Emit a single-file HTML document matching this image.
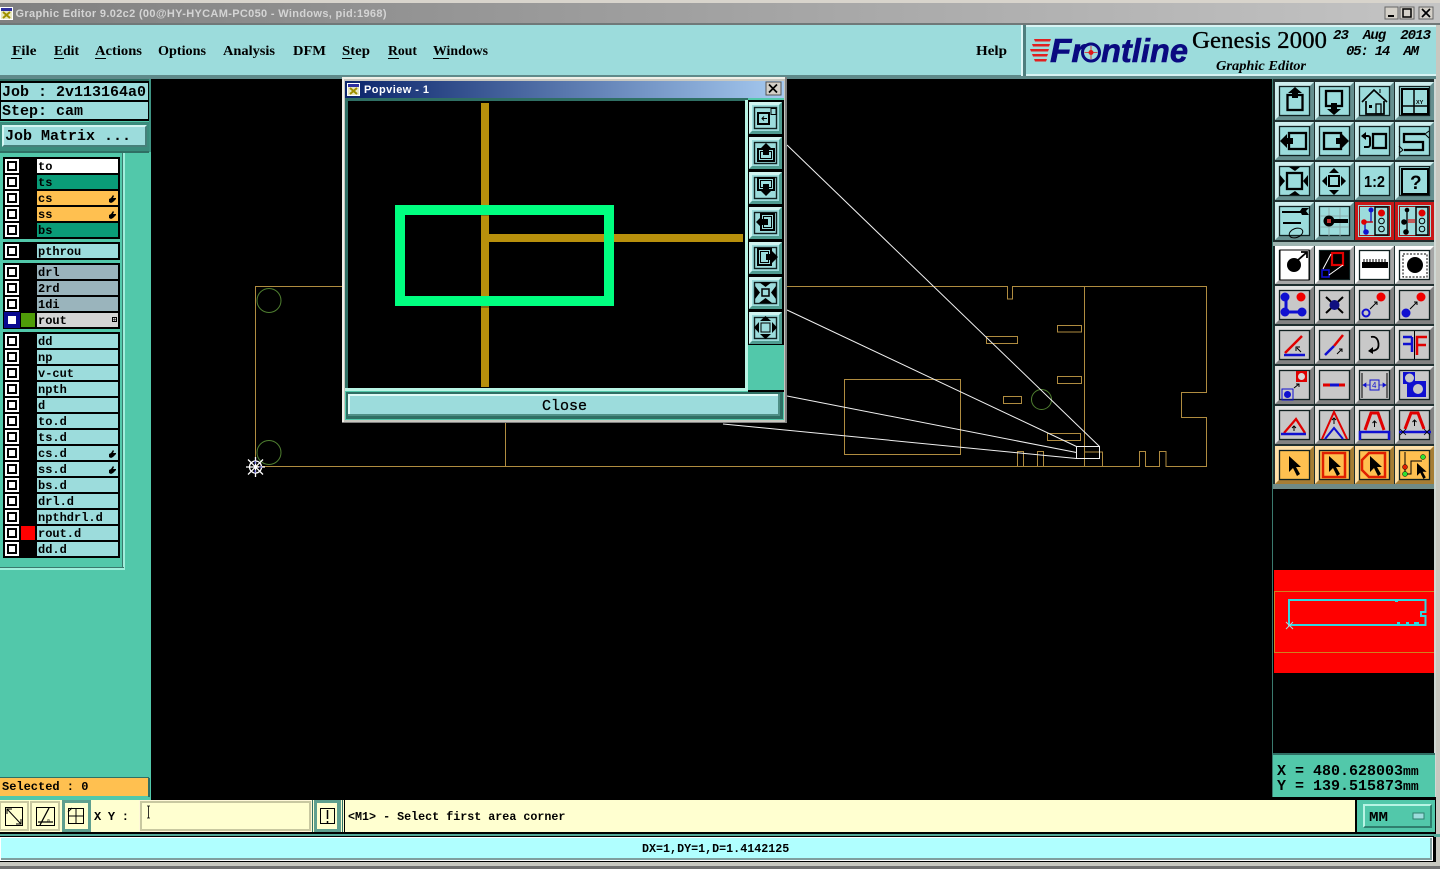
<!DOCTYPE html>
<html><head><meta charset="utf-8"><title>Graphic Editor</title>
<style>
html,body{margin:0;padding:0;background:#000;width:1440px;height:869px;overflow:hidden}
svg{display:block}
text{white-space:pre}
.m{font-family:"Liberation Serif",serif;font-weight:bold;font-size:14px;fill:#000}
.l{font-family:"Liberation Mono",monospace;font-weight:bold;font-size:12px;fill:#000}
.j{font-family:"Liberation Mono",monospace;font-weight:bold;font-size:15px;fill:#000}
.t{font-family:"Liberation Sans",sans-serif;font-weight:bold;font-size:11px}
</style></head><body>
<svg xmlns="http://www.w3.org/2000/svg" width="1440" height="869" viewBox="0 0 1440 869">
<defs>
<linearGradient id="tg" x1="0" x2="1" y1="0" y2="0"><stop offset="0" stop-color="#808080"/><stop offset="1" stop-color="#c4c4c4"/></linearGradient>
<linearGradient id="pg" x1="0" x2="1" y1="0" y2="0"><stop offset="0" stop-color="#0a246a"/><stop offset="1" stop-color="#a6caf0"/></linearGradient>
<g id="k"><rect x="5" width="14" height="14" fill="#fff"/><rect x="7" y="2" width="10" height="10" fill="#000"/><rect x="9" y="4" width="6" height="6" fill="#fff"/></g>
<path id="h" d="M0 7V4l2-1 2-3 1 1-1 2h3v1l-3 3-2 1H2z" fill="#000"/>
<g id="b"><rect width="39" height="38" fill="currentColor"/><path d="M0 0H39L35 4H4V34L0 38z" fill="#fff" opacity=".5"/><path d="M39 0V38H0L4 34H35V4z" fill="#000" opacity=".35"/><rect x="4.500" y="4.500" width="30" height="29" fill="none" stroke="#102020" stroke-width="1.300"/></g>
<g id="p"><rect width="33" height="32" fill="#9cdcdc"/><path d="M0 0H33L30 3H3V29L0 32z" fill="#d0f4f0"/><path d="M33 0V32H0L3 29H30V3z" fill="#4f9c90"/><rect x="5.500" y="5.500" width="22" height="21" fill="none" stroke="#102020" stroke-width="1.400"/></g>
<path id="ar" d="M0 0V16L4 12 8 20 11 18 7 11H12z" fill="#000"/>
<g id="xi"><rect width="13" height="13" fill="#fff"/><rect x="1" y="1" width="11" height="11" fill="#3030a0"/><rect x="1" y="4" width="11" height="8" fill="#e8e8c0"/><path d="M3 5l7 6M10 5l-7 6" stroke="#a09000" stroke-width="2"/></g>
</defs>

<!-- title bar -->
<rect width="1440" height="869" fill="#000"/>
<rect y="0" width="1440" height="3" fill="#d8d4cc"/>
<rect y="3" width="1440" height="20" fill="url(#tg)"/>
<rect y="23" width="1440" height="2" fill="#707878"/>
<use href="#xi" x="0" y="7"/>
<text class="t" x="15.500" y="17" fill="#d4d4d4" textLength="371">Graphic Editor 9.02c2 (00@HY-HYCAM-PC050 - Windows, pid:1968)</text>
<g>
<rect x="1385" y="7" width="13" height="12" fill="#d4d0c8" stroke="#666"/><rect x="1388" y="15" width="6" height="2" fill="#000"/>
<rect x="1400" y="7" width="14" height="12" fill="#d4d0c8" stroke="#666"/><rect x="1403" y="9" width="8" height="8" fill="none" stroke="#000" stroke-width="1.500"/>
<rect x="1419" y="7" width="14" height="12" fill="#d4d0c8" stroke="#666"/><path d="M1422 9l8 8M1430 9l-8 8" stroke="#000" stroke-width="1.700"/>
</g>

<!-- menu -->
<rect y="25" width="1440" height="51" fill="#9cdcdc"/>
<rect y="75" width="1440" height="4" fill="#5f8a8a"/>
<text class="m" x="12" y="55" textLength="24.500" lengthAdjust="spacingAndGlyphs">File</text><rect x="11" y="58" width="11" height="1" fill="#000"/>
<text class="m" x="54" y="55" textLength="25" lengthAdjust="spacingAndGlyphs">Edit</text><rect x="54" y="58" width="10" height="1" fill="#000"/>
<text class="m" x="95" y="55" textLength="47" lengthAdjust="spacingAndGlyphs">Actions</text><rect x="95" y="58" width="11" height="1" fill="#000"/>
<text class="m" x="158" y="55" textLength="48" lengthAdjust="spacingAndGlyphs">Options</text>
<text class="m" x="223" y="55" textLength="52" lengthAdjust="spacingAndGlyphs">Analysis</text>
<text class="m" x="293" y="55" textLength="33" lengthAdjust="spacingAndGlyphs">DFM</text>
<text class="m" x="342" y="55" textLength="28" lengthAdjust="spacingAndGlyphs">Step</text><rect x="342" y="58" width="10" height="1" fill="#000"/>
<text class="m" x="388" y="55" textLength="29" lengthAdjust="spacingAndGlyphs">Rout</text><rect x="388" y="58" width="11" height="1" fill="#000"/>
<text class="m" x="433" y="55" textLength="55" lengthAdjust="spacingAndGlyphs">Windows</text><rect x="433" y="58" width="16" height="1" fill="#000"/>
<text class="m" x="976" y="55" textLength="31" lengthAdjust="spacingAndGlyphs">Help</text>

<!-- logo area -->
<rect x="1021" y="25" width="2" height="51" fill="#e0f8f8"/><rect x="1023" y="25" width="3" height="51" fill="#4f7f7f"/>
<rect x="1026" y="25" width="410" height="2" fill="#d8f4f4"/>
<rect x="1026" y="74" width="410" height="2" fill="#d8f4f4"/>
<g fill="#e02020"><path d="M1034 39h17l-1 2.500h-15zM1032 44h18l-1 2.500h-16zM1030 49h19l-1 2.500h-17zM1032 54h16l-1 2.500h-14zM1034 59h13l-1 2.500h-11z"/></g>
<text x="1050" y="62" font-family="Liberation Sans,sans-serif" font-weight="bold" font-style="italic" font-size="33" fill="#0a0a80" stroke="#0a0a80" stroke-width=".6" textLength="35" lengthAdjust="spacingAndGlyphs">Fr</text>
<circle cx="1091" cy="52.500" r="8.500" fill="#9cdcdc" stroke="#0a0a80" stroke-width="3"/>
<circle cx="1091" cy="52.500" r="2.500" fill="#e01818"/><path d="M1091 46v13M1084.500 52.500h13" stroke="#e01818" stroke-width=".8"/>
<text x="1101" y="62" font-family="Liberation Sans,sans-serif" font-weight="bold" font-style="italic" font-size="33" fill="#0a0a80" stroke="#0a0a80" stroke-width=".6" textLength="87" lengthAdjust="spacingAndGlyphs">ntline</text>
<text x="1192" y="48" font-family="Liberation Serif,serif" font-size="24.500" fill="#000" textLength="135" lengthAdjust="spacingAndGlyphs" style="stroke:#000;stroke-width:.3">Genesis 2000</text>
<text x="1216" y="70" font-family="Liberation Serif,serif" font-weight="bold" font-style="italic" font-size="14" fill="#000" textLength="90" lengthAdjust="spacingAndGlyphs">Graphic Editor</text>
<text x="1333" y="39" font-family="Liberation Mono,monospace" font-weight="bold" font-style="italic" font-size="14" fill="#000" textLength="98">23  Aug  2013</text>
<text x="1346" y="55" font-family="Liberation Mono,monospace" font-weight="bold" font-style="italic" font-size="14" fill="#000" textLength="73">05: 14  AM</text>

<!-- left panel -->
<rect x="0" y="79" width="151" height="721" fill="#52c8aa"/>
<rect x="0" y="79" width="150" height="2" fill="#2f6f64"/>
<rect x="149" y="79" width="2" height="73" fill="#3f9383"/>
<rect x="0" y="81" width="149" height="40" fill="#000"/>
<rect x="1" y="83" width="147" height="17" fill="#9cdcdc"/>
<rect x="1" y="102" width="147" height="17" fill="#9cdcdc"/>
<text class="j" x="2" y="96" textLength="144">Job : 2v113164a0</text>
<text class="j" x="2" y="115" textLength="81">Step: cam</text>
<rect x="0" y="122" width="149" height="29" fill="#3a8c7c"/>
<rect x="2" y="125" width="145" height="22" fill="#9cdcdc"/>
<path d="M2 125H147L145 127H4V145L2 147z" fill="#d4f7f3"/><path d="M147 125V147H2L4 145H145V127z" fill="#46807a"/>
<text class="j" x="5" y="140" textLength="126">Job Matrix ...</text>
<rect x="0" y="151" width="149" height="2" fill="#2f6f64"/>

<rect x="0" y="153" width="123" height="415" fill="#52c8aa"/>
<rect x="123" y="153" width="2" height="417" fill="#a0f0dc"/>
<rect x="122" y="153" width="1" height="415" fill="#3a7a6e"/>
<rect x="0" y="567" width="124" height="1" fill="#3a7a6e"/>
<rect x="0" y="568" width="125" height="2" fill="#a0f0dc"/>

<!-- layer groups -->
<rect x="3" y="157" width="117" height="82" fill="#000"/>
<rect x="3" y="242" width="117" height="18" fill="#000"/>
<rect x="3" y="263" width="117" height="66" fill="#000"/>
<rect x="3" y="332" width="117" height="226" fill="#000"/>

<g>
<rect x="37" y="159" width="81" height="14" fill="#fff"/>
<rect x="37" y="175" width="81" height="14" fill="#0a9c78"/>
<rect x="37" y="191" width="81" height="14" fill="#ffc050"/>
<rect x="37" y="207" width="81" height="14" fill="#ffc050"/>
<rect x="37" y="223" width="81" height="14" fill="#0a9c78"/>
<rect x="37" y="244" width="81" height="14" fill="#9cdcdc"/>
<rect x="37" y="265" width="81" height="14" fill="#9ab4bc"/>
<rect x="37" y="281" width="81" height="14" fill="#9ab4bc"/>
<rect x="37" y="297" width="81" height="14" fill="#9ab4bc"/>
<rect x="37" y="313" width="81" height="14" fill="#d4d4d4"/>
<rect x="37" y="334" width="81" height="14" fill="#9cdcdc"/>
<rect x="37" y="350" width="81" height="14" fill="#9cdcdc"/>
<rect x="37" y="366" width="81" height="14" fill="#9cdcdc"/>
<rect x="37" y="382" width="81" height="14" fill="#9cdcdc"/>
<rect x="37" y="398" width="81" height="14" fill="#9cdcdc"/>
<rect x="37" y="414" width="81" height="14" fill="#9cdcdc"/>
<rect x="37" y="430" width="81" height="14" fill="#9cdcdc"/>
<rect x="37" y="446" width="81" height="14" fill="#9cdcdc"/>
<rect x="37" y="462" width="81" height="14" fill="#9cdcdc"/>
<rect x="37" y="478" width="81" height="14" fill="#9cdcdc"/>
<rect x="37" y="494" width="81" height="14" fill="#9cdcdc"/>
<rect x="37" y="510" width="81" height="14" fill="#9cdcdc"/>
<rect x="37" y="526" width="81" height="14" fill="#9cdcdc"/>
<rect x="37" y="542" width="81" height="14" fill="#9cdcdc"/>
</g>
<g>
<use href="#k" y="159"/><use href="#k" y="175"/><use href="#k" y="191"/><use href="#k" y="207"/><use href="#k" y="223"/><use href="#k" y="244"/><use href="#k" y="265"/><use href="#k" y="281"/><use href="#k" y="297"/>
<rect x="4" y="312" width="16" height="16" fill="#0a0a90"/><rect x="8" y="316" width="8" height="8" fill="#fff"/>
<use href="#k" y="334"/><use href="#k" y="350"/><use href="#k" y="366"/><use href="#k" y="382"/><use href="#k" y="398"/><use href="#k" y="414"/><use href="#k" y="430"/><use href="#k" y="446"/><use href="#k" y="462"/><use href="#k" y="478"/><use href="#k" y="494"/><use href="#k" y="510"/><use href="#k" y="526"/><use href="#k" y="542"/>
</g>
<rect x="21" y="313" width="14" height="14" fill="#4f9c08"/>
<rect x="21" y="526" width="14" height="14" fill="#ff0000"/>
<g>
<text class="l" x="38" y="170">to</text>
<text class="l" x="38" y="186">ts</text>
<text class="l" x="38" y="202">cs</text>
<text class="l" x="38" y="218">ss</text>
<text class="l" x="38" y="234">bs</text>
<text class="l" x="38" y="255">pthrou</text>
<text class="l" x="38" y="276">drl</text>
<text class="l" x="38" y="292">2rd</text>
<text class="l" x="38" y="308">1di</text>
<text class="l" x="38" y="324">rout</text>
<text class="l" x="38" y="345">dd</text>
<text class="l" x="38" y="361">np</text>
<text class="l" x="38" y="377">v-cut</text>
<text class="l" x="38" y="393">npth</text>
<text class="l" x="38" y="409">d</text>
<text class="l" x="38" y="425">to.d</text>
<text class="l" x="38" y="441">ts.d</text>
<text class="l" x="38" y="457">cs.d</text>
<text class="l" x="38" y="473">ss.d</text>
<text class="l" x="38" y="489">bs.d</text>
<text class="l" x="38" y="505">drl.d</text>
<text class="l" x="38" y="521">npthdrl.d</text>
<text class="l" x="38" y="537">rout.d</text>
<text class="l" x="38" y="553">dd.d</text>
</g>
<use href="#h" x="109" y="195"/><use href="#h" x="109" y="211"/><use href="#h" x="109" y="450"/><use href="#h" x="109" y="466"/>
<rect x="112.500" y="317.500" width="4" height="4" fill="none" stroke="#000"/><path d="M114.500 318v3M113 319.500h3" stroke="#000" stroke-width=".5"/>

<!-- selected -->
<rect x="0" y="778" width="149" height="18" fill="#ffc050"/>
<rect x="0" y="777" width="149" height="1" fill="#2f6f64"/>
<rect x="148" y="778" width="2" height="19" fill="#2f6f64"/>
<text class="l" x="2" y="790">Selected : 0</text>

<!-- canvas drawing -->
<g fill="none" stroke="#b08c40" stroke-width="1">
<path d="M342 286.500H255.500V466.500H1102.500V452H1084.500M787 286.500H1007.500V299H1012.500V286.500H1206.500V392.500H1181.500V417.500H1206.500V466.500H1166V451.500H1159.500V466.500H1145.500V451.500H1139.500V466.500H1102.500"/>
<path d="M505.500 423V466.500M1084.500 286.500V466.500M1017.500 466.500V451.500H1023.500V466.500M1037.500 466.500V451.500H1043.500V466.500"/>
<rect x="986.500" y="336.500" width="31" height="7"/>
<rect x="1057.500" y="325.500" width="24" height="6.500"/>
<rect x="1057.500" y="376.500" width="24" height="7"/>
<rect x="1003.500" y="396.500" width="18" height="7"/>
<rect x="1047.500" y="433.500" width="33" height="7"/>
<rect x="844.500" y="379.500" width="116" height="75"/>
</g>
<g fill="none" stroke="#4f7f30" stroke-width="1">
<circle cx="269" cy="300.500" r="12"/><circle cx="269" cy="452.500" r="12"/><circle cx="1041.500" cy="399.500" r="10"/>
</g>
<g fill="none" stroke="#f0f0f0" stroke-width="1">
<rect x="1076.500" y="446.500" width="23" height="12"/>
<path d="M787 145L1099.500 446.500M787 310L1076.500 446.500M787 396L1076.500 452.500M723 424L1076.500 458.500"/>
</g>
<g fill="none" stroke="#fff" stroke-width="1.300">
<circle cx="255.500" cy="467" r="6"/><path d="M248 459.500L263 474.500M263 459.500L248 474.500M255.500 457V477M246 467H265"/>
</g>
<path d="M255 461v3M255 470v3M259 467h3" stroke="#3030c0" fill="none"/>

<!-- popview -->
<rect x="342" y="77" width="445" height="346" fill="#c8c8c0"/>
<rect x="342" y="77" width="445" height="2" fill="#f0f0e8"/><rect x="342" y="77" width="2" height="346" fill="#f0f0e8"/>
<rect x="785" y="77" width="2" height="346" fill="#808080"/><rect x="342" y="422" width="445" height="1" fill="#808080"/>
<rect x="345" y="81" width="439" height="17" fill="url(#pg)"/>
<use href="#xi" x="347" y="83"/>
<text class="t" x="364" y="93" fill="#fff" textLength="65">Popview - 1</text>
<rect x="766" y="82" width="15" height="13" fill="#d4d0c8" stroke="#555"/><path d="M769 84.500l8 8M777 84.500l-8 8" stroke="#000" stroke-width="1.700"/>
<rect x="345" y="98" width="439" height="322" fill="#52c8aa"/>
<rect x="345" y="98" width="403" height="3" fill="#2f6f64"/>
<rect x="345" y="98" width="3" height="292" fill="#2f6f64"/>
<rect x="745" y="100" width="3" height="290" fill="#b8f4e4"/>
<rect x="345" y="388" width="403" height="3" fill="#b8f4e4"/>
<rect x="348" y="101" width="397" height="287" fill="#000"/>
<rect x="481" y="103" width="8" height="284" fill="#b8900c"/>
<rect x="489" y="234" width="254" height="8" fill="#b8900c"/>
<rect x="395" y="205" width="219" height="10" fill="#00ff80"/>
<rect x="395" y="296" width="219" height="10" fill="#00ff80"/>
<rect x="395" y="205" width="10" height="101" fill="#00ff80"/>
<rect x="604" y="205" width="10" height="101" fill="#00ff80"/>
<rect x="481" y="215" width="8" height="1" fill="#806a10"/><rect x="481" y="306" width="8" height="2" fill="#806a10"/>

<rect x="748" y="100" width="36" height="290" fill="#000"/>
<rect x="748" y="345" width="36" height="46" fill="#52c8aa"/>
<rect x="748" y="390" width="36" height="2" fill="#000"/>
<use href="#p" x="749" y="102"/><use href="#p" x="749" y="137"/><use href="#p" x="749" y="172"/><use href="#p" x="749" y="207"/><use href="#p" x="749" y="242"/><use href="#p" x="749" y="277"/><use href="#p" x="749" y="312"/>
<g fill="none" stroke="#000" stroke-width="2">
<rect x="758" y="113" width="11" height="11"/><rect x="771" y="108.500" width="5" height="6" stroke-width="1"/><path d="M767 118.500h-5m2-2l-2 2 2 2" stroke-width="1"/>
<rect x="758" y="149" width="16" height="12"/><rect x="760.500" y="151.500" width="11" height="7" stroke-width="1"/>
<rect x="758" y="178" width="16" height="12"/><rect x="760.500" y="180.500" width="11" height="7" stroke-width="1"/>
<rect x="761" y="214" width="13" height="16"/><rect x="763.500" y="216.500" width="8" height="11" stroke-width="1"/>
<rect x="758" y="249" width="13" height="16"/><rect x="760.500" y="251.500" width="8" height="11" stroke-width="1"/>
<rect x="762" y="289" width="7" height="7" stroke-width="1.500"/>
<rect x="761" y="323" width="9" height="9" stroke-width="1"/>
</g>
<g fill="#000">
<path d="M766 143l6 6h-3v6h-6v-6h-3zM766 196l6-6h-3v-6h-6v6h-3zM756 222l6-6v3h6v6h-6v3zM778 257l-6-6v3h-6v6h6v3z"/>
<path d="M759 282h13l-6.500 5zM759 303h13l-6.500-5zM755 286v13l5-6.500zM776 286v13l-5-6.500z"/>
<path d="M765.500 316l5.500 5h-11zM765.500 339l5.500-5h-11zM754 327.500l5-5.500v11zM777 327.500l-5-5.500v11z"/>
</g>

<rect x="346" y="392" width="437" height="27" fill="#2f6f64"/>
<rect x="348" y="394" width="432" height="22" fill="#9cdcdc"/>
<path d="M348 394H780V396H350V416H348z" fill="#e0faf6"/><path d="M780 394V416H348V414H778V394z" fill="#4f8f86"/>
<text x="542" y="410" font-family="Liberation Mono,monospace" font-size="15" fill="#000" style="stroke:#000;stroke-width:.3">Close</text>

<!-- right panel -->
<rect x="1272" y="79" width="164" height="410" fill="#1e2e2e"/>
<rect x="1272" y="79" width="1" height="720" fill="#3a7a6e"/>
<rect x="1434" y="79" width="2" height="720" fill="#d0d8d4"/>
<rect x="1436" y="25" width="4" height="840" fill="#c8c8c0"/>
<rect x="1273" y="242" width="161" height="4" fill="#9cb4b0"/>
<rect x="1273" y="484" width="161" height="5" fill="#6f8a86"/>

<!-- icons group 1 -->
<g color="#9cdcdc">
<g transform="translate(1275,82)"><use href="#b"/><rect x="12.500" y="13" width="15" height="15" fill="none" stroke="#000" stroke-width="2.300"/><path d="M20 5l7 6h-4v5h-6v-5h-4z"/></g>
<g transform="translate(1315,82)"><use href="#b"/><rect x="11" y="9" width="16" height="15" fill="none" stroke="#000" stroke-width="2.300"/><path d="M19 33l7-6h-4v-6h-6v6h-4z"/></g>
<g transform="translate(1355,82)"><use href="#b"/><path d="M7 20L19 8 32 20M11 19V32H29V19" fill="none" stroke="#000" stroke-width="1.700"/><rect x="21" y="22" width="5" height="10" fill="none" stroke="#000" stroke-width="1.300"/><rect x="14" y="23" width="3" height="3"/><path d="M25 11V7" stroke="#000"/></g>
<g transform="translate(1395,82)"><use href="#b"/><rect x="7" y="7" width="26" height="25" fill="none" stroke="#000" stroke-width="2"/><path d="M19 7V32M7 24H33" stroke="#000" stroke-width="1.500"/><text x="21" y="22" font-family="Liberation Sans,sans-serif" font-weight="bold" font-size="5.500">XY</text></g>

<g transform="translate(1275,122)"><use href="#b"/><rect x="14" y="11" width="17" height="16" fill="none" stroke="#000" stroke-width="2.300"/><path d="M5 19l7-7v4h6v6h-6v4z"/></g>
<g transform="translate(1315,122)"><use href="#b"/><rect x="9" y="11" width="17" height="16" fill="none" stroke="#000" stroke-width="2.300"/><path d="M34 19l-7-7v4h-6v6h6v4z"/></g>
<g transform="translate(1355,122)"><use href="#b"/><rect x="18" y="12" width="13" height="14" fill="none" stroke="#000" stroke-width="2.300"/><path d="M8 14h5a2 2 0 0 1 2 2v7a2 2 0 0 1-2 2H9" fill="none" stroke="#000" stroke-width="2"/><path d="M11 10v8l-5-4z"/></g>
<g transform="translate(1395,122)"><use href="#b"/><path d="M30 12H9V20H28V28H9" fill="none" stroke="#000" stroke-width="2.300"/><path d="M34 9L30 12 34 16M4 24L8 28 4 31" fill="none" stroke="#000"/></g>

<g transform="translate(1275,162)"><use href="#b"/><rect x="12" y="11" width="15" height="16" fill="none" stroke="#000" stroke-width="2.300"/><path d="M14 5h11l-5 4zM14 33h11l-5-4zM5 13v12l5-6zM33 13v12l-5-6z"/></g>
<g transform="translate(1315,162)"><use href="#b"/><rect x="14" y="14" width="10" height="10" fill="none" stroke="#000" stroke-width="2"/><path d="M19 6l5 5H14zM19 33l5-5H14zM7 19l5-5v10zM31 19l-5-5v10z"/></g>
<g transform="translate(1355,162)"><use href="#b"/><text x="9" y="25" font-family="Liberation Sans,sans-serif" font-weight="bold" font-size="16" textLength="21" lengthAdjust="spacingAndGlyphs">1:2</text></g>
<g transform="translate(1395,162)"><use href="#b"/><rect x="7" y="7" width="26" height="25" fill="none" stroke="#000" stroke-width="2"/><text x="15" y="27" font-family="Liberation Sans,sans-serif" font-weight="bold" font-size="19">?</text></g>

<g transform="translate(1275,202)"><use href="#b"/><path d="M7 10H26M8 21H26" stroke="#000" stroke-width="2"/><path d="M27 6h7l-3 3 3 4h-7l-2-4z"/><ellipse cx="21" cy="31" rx="7" ry="4.500" fill="none" stroke="#000" transform="rotate(-20 21 31)"/></g>
<g transform="translate(1315,202)"><use href="#b"/><path d="M14 5V34M25 5V34M5 14H34M5 25H34" stroke="#8aacac"/><circle cx="14" cy="19" r="5.500"/><rect x="16" y="17" width="17" height="4"/><rect x="12" y="17" width="4" height="4" fill="#c03030"/></g>
<g transform="translate(1355,202)"><rect width="39" height="38" fill="#c81818"/><rect x="3" y="3" width="33" height="32" fill="#9cdcdc"/><rect x="4.500" y="4.500" width="30" height="29" fill="none" stroke="#a01010"/><rect x="20" y="5" width="13" height="28" fill="none" stroke="#000" stroke-width="1.500"/><circle cx="26.500" cy="11" r="3.500" fill="#e00000"/><circle cx="26.500" cy="19" r="2.800" fill="none" stroke="#000"/><circle cx="26.500" cy="27" r="2.800" fill="none" stroke="#000"/><path d="M16 8V20H10V29" fill="none" stroke="#1010c0" stroke-width="1.300"/><path d="M10 20H18" stroke="#d00000" stroke-width="1.300"/><circle cx="16" cy="8" r="2.500" fill="#1010d0"/><circle cx="9" cy="20" r="2.800" fill="#e00000"/><circle cx="11" cy="30" r="2.800" fill="#1010d0"/></g>
<g transform="translate(1395,202)"><rect width="39" height="38" fill="#c81818"/><rect x="3" y="3" width="33" height="32" fill="#9cdcdc"/><rect x="4.500" y="4.500" width="30" height="29" fill="none" stroke="#a01010"/><rect x="21" y="5" width="12" height="28" fill="none" stroke="#000" stroke-width="1.500"/><circle cx="27" cy="11" r="3.500" fill="#e00000"/><circle cx="27" cy="19" r="2.800" fill="none" stroke="#000"/><circle cx="27" cy="27" r="2.800" fill="none" stroke="#000"/><path d="M12 8V20H9M12 20V30" fill="none" stroke="#000" stroke-width="1.300"/><path d="M13 18h7M13 20h7" stroke="#d03030" stroke-width="1.500"/><circle cx="12" cy="8" r="2.300"/><circle cx="9" cy="20" r="2.800"/><circle cx="11" cy="30" r="2.800"/></g>
</g>

<!-- group 2 -->
<g color="#fff">
<g transform="translate(1275,246)"><use href="#b"/><rect x="5" y="4" width="29" height="30" fill="#fff" stroke="#000"/><circle cx="19" cy="19" r="7"/><path d="M23 14L31 7M26 6h6v6" fill="none" stroke="#000" stroke-width="1.800"/></g>
<g transform="translate(1315,246)"><use href="#b"/><rect x="5" y="5" width="29" height="28" fill="#000"/><rect x="17" y="7" width="11" height="12" fill="none" stroke="#e00000" stroke-width="2.200"/><rect x="7" y="24" width="7" height="7" fill="none" stroke="#1010d0" stroke-width="1.600"/><path d="M8 23L16 8M14 29L28 19" stroke="#fff" fill="none"/></g>
<g transform="translate(1355,246)"><use href="#b"/><rect x="7" y="16" width="26" height="6"/><path d="M9 13V16M12 13V16M15 13V16M18 13V16M21 13V16M24 13V16M27 13V16M30 13V16" stroke="#000"/></g>
<g transform="translate(1395,246)"><use href="#b"/><rect x="8" y="8" width="24" height="23" fill="none" stroke="#000" stroke-dasharray="2 1.500"/><circle cx="20" cy="19" r="8"/></g>
</g>
<g color="#c8c8c8">
<g transform="translate(1275,286)"><use href="#b"/><path d="M11 11V26H25" fill="none" stroke="#1010d0" stroke-width="3"/><circle cx="10" cy="11" r="4.500" fill="#1010d0"/><circle cx="10" cy="26" r="4.500" fill="#1010d0"/><circle cx="27" cy="26" r="4.500" fill="#1010d0"/><circle cx="26" cy="11" r="4.500" fill="#f00000"/></g>
<g transform="translate(1315,286)"><use href="#b"/><path d="M11 11L28 27M28 11L11 27" stroke="#000" stroke-width="2"/><circle cx="19.500" cy="19" r="5" fill="#101080"/></g>
<g transform="translate(1355,286)"><use href="#b"/><circle cx="26" cy="11" r="4.500" fill="#f00000"/><circle cx="11" cy="27" r="3.500" fill="none" stroke="#1010d0" stroke-width="2"/><path d="M15 23L22 16M19 16h3v3" fill="none" stroke="#000"/></g>
<g transform="translate(1395,286)"><use href="#b"/><circle cx="26" cy="11" r="4.500" fill="#f00000"/><circle cx="11" cy="27" r="4.500" fill="#1010d0"/><path d="M15 23L22 16M19 16h3v3" fill="none" stroke="#000"/></g>

<g transform="translate(1275,326)"><use href="#b"/><path d="M10 27L27 10" stroke="#e00000" stroke-width="2.500"/><path d="M9 29H30" stroke="#1010d0" stroke-width="2.500"/><path d="M22 22L26 26M21 25v-4h4" fill="none" stroke="#000"/></g>
<g transform="translate(1315,326)"><use href="#b"/><path d="M28 9L19 20" stroke="#e00000" stroke-width="2.500"/><path d="M19 20L10 29" stroke="#1010d0" stroke-width="2.500"/><path d="M22 28L27 23M24 23h3v3" fill="none" stroke="#000"/></g>
<g transform="translate(1355,326)"><use href="#b"/><path d="M16 11c8-2 9 10 6 12-2 2-5 2-7 2" fill="none" stroke="#000" stroke-width="1.800"/><path d="M18 21v7l-5-3z"/></g>
<g transform="translate(1395,326)"><use href="#b"/><path d="M19.500 5V33" stroke="#000"/><path d="M17 11H8M17 11V26M8 18H17" fill="none" stroke="#1010d0" stroke-width="2.500"/><path d="M22 29V11H32M22 19H31" fill="none" stroke="#e00000" stroke-width="2.500"/></g>

<g transform="translate(1275,366)"><use href="#b"/><rect x="21" y="5" width="11" height="11" fill="#e00000"/><circle cx="26.500" cy="10.500" r="3.500" fill="#d8d8d8"/><rect x="7" y="23" width="11" height="11" fill="none" stroke="#1010d0"/><circle cx="12.500" cy="28.500" r="3.500" fill="#1010d0"/><path d="M19 22L24 18M21 18h3v3" fill="none" stroke="#000"/></g>
<g transform="translate(1315,366)"><use href="#b"/><path d="M8 19H30" stroke="#e00000" stroke-width="3"/><path d="M15 19H24" stroke="#1010d0" stroke-width="3"/></g>
<g transform="translate(1355,366)"><use href="#b"/><path d="M7 7V32M32 7V32" stroke="#000"/><path d="M8 19H31M8 19l3-2v4zM31 19l-3-2v4z" fill="#1010d0" stroke="#1010d0" stroke-width=".7"/><rect x="15" y="14" width="9" height="10" fill="#c8c8c8" stroke="#1010d0"/><text x="17" y="22" font-family="Liberation Sans,sans-serif" font-size="8" fill="#1010d0">4</text></g>
<g transform="translate(1395,366)"><use href="#b"/><path d="M8 6H20V15H31V31H12V18H8z" fill="#1010d0"/><circle cx="14.500" cy="12" r="4.500" fill="#c8c8c8"/><circle cx="23" cy="23" r="5" fill="#c8c8c8"/></g>

<g transform="translate(1275,406)"><use href="#b"/><path d="M9 27L21 13 30 27" fill="none" stroke="#e00000" stroke-width="2.200"/><path d="M6 28H31" stroke="#1010d0" stroke-width="2.500"/><path d="M19 20v5M17 22l2-2 2 2" fill="none" stroke="#000"/></g>
<g transform="translate(1315,406)"><use href="#b"/><path d="M7 33L19 6 32 33" fill="none" stroke="#e00000" stroke-width="2"/><path d="M10 33L19 22 28 33" fill="none" stroke="#1010d0" stroke-width="2"/><path d="M19 12v6M17 14l2-2 2 2" fill="none" stroke="#000"/></g>
<g transform="translate(1355,406)"><use href="#b"/><path d="M10 24L16 7H23L29 24" fill="none" stroke="#e00000" stroke-width="3"/><path d="M5 34V26H34V34" fill="none" stroke="#1010d0" stroke-width="2.500"/><path d="M19.500 15v6M17.500 17l2-2 2 2" fill="none" stroke="#000"/></g>
<g transform="translate(1395,406)"><use href="#b"/><path d="M10 23L16 7H23L29 23" fill="none" stroke="#e00000" stroke-width="3"/><path d="M4 26H36" stroke="#1010d0" stroke-width="2.500"/><path d="M5 23l6 6M11 23l-6 6M29 23l6 6M35 23l-6 6" stroke="#000" fill="none" stroke-width=".8"/><path d="M19.500 14v6M17.500 16l2-2 2 2" fill="none" stroke="#000"/></g>
</g>
<g color="#ffc050">
<g transform="translate(1275,446)"><use href="#b"/><use href="#ar" x="14" y="10"/></g>
<g transform="translate(1315,446)"><use href="#b"/><rect x="8" y="7" width="22" height="24" fill="none" stroke="#e02000" stroke-width="2.500"/><use href="#ar" x="14" y="10"/></g>
<g transform="translate(1355,446)"><use href="#b"/><path d="M14 7H30V31H14L7 24V14z" fill="none" stroke="#e02000" stroke-width="2.500"/><use href="#ar" x="15" y="10"/></g>
<g transform="translate(1395,446)"><use href="#b"/><path d="M10 6V20M10 20V28M10 28H16V15H27" fill="none" stroke="#000"/><circle cx="10" cy="21" r="2.500" fill="#e02000" stroke="#000" stroke-width=".5"/><circle cx="10" cy="28" r="2.500" fill="#30e030" stroke="#000" stroke-width=".5"/><circle cx="28" cy="11" r="2.500" fill="#30e030" stroke="#000" stroke-width=".5"/><g transform="translate(22,17) scale(.8)"><use href="#ar"/></g></g>
</g>

<!-- map -->
<rect x="1273" y="489" width="161" height="264" fill="#000"/>
<rect x="1274" y="570" width="160" height="103" fill="#ff0000"/>
<path d="M1274 591.500H1434M1274 652.500H1434M1274.500 591V653" stroke="#d08020" fill="none"/>
<path d="M1289 600H1425.500V612H1421V616H1425.500V625H1289Z" fill="none" stroke="#30d8e0" stroke-width="2"/>
<path d="M1395 600h3v2h-3zM1397 622h3v3h-3zM1406 622h3v3h-3zM1414 622h5v3h-5z" fill="#30d8e0"/>
<path d="M1286 622l7 7M1293 622l-7 7" stroke="#b0d8d8"/>

<!-- coordinates -->
<rect x="1273" y="753" width="162" height="46" fill="#52c8aa"/>
<rect x="1273" y="753" width="162" height="2" fill="#2f6f64"/>
<text class="j" x="1277" y="775">X = 480.628003<tspan font-size="13">mm</tspan></text>
<text class="j" x="1277" y="790">Y = 139.515873<tspan font-size="13">mm</tspan></text>

<!-- command bar -->
<rect x="0" y="800" width="1356" height="32" fill="#ffffd0"/>
<rect x="0" y="832" width="1436" height="2" fill="#000"/>
<rect x="151" y="797" width="1285" height="3" fill="#000"/>
<g fill="none" stroke="#000">
<rect x="0" y="802" width="28" height="28" stroke="#c8c8a0" stroke-width="2"/><rect x="5.500" y="807.500" width="17" height="18"/><path d="M7 809L21 824M16 824h5v-5M7 814V809h5"/>
<rect x="31" y="802" width="28" height="28" stroke="#c8c8a0" stroke-width="2"/><rect x="36.500" y="807.500" width="18" height="18"/><path d="M40 825L49 808M38 822H53" stroke-width="1.300"/>
</g>
<text x="47" y="822" font-family="Liberation Sans,sans-serif" font-size="5" fill="#000">a</text>
<rect x="62" y="800" width="29" height="32" fill="#5f9f8f"/><rect x="65" y="803" width="23" height="26" fill="#ffffd0"/>
<rect x="68.500" y="808.500" width="15" height="15" fill="none" stroke="#000"/><path d="M76 808V824M69 816H83" stroke="#000"/><path d="M68 812L72 808" stroke="#000"/>
<text class="l" x="94" y="820" textLength="35">X Y :</text>
<rect x="139" y="800" width="173" height="32" fill="#fff8d8"/>
<rect x="141" y="802" width="169" height="28" fill="#ffffd0" stroke="#c8c8a0" stroke-width="2"/>
<path d="M147 806h3M148.500 806v12M147 818h3" stroke="#000" stroke-width=".8" fill="none"/>
<rect x="312" y="800" width="1" height="32" fill="#2f6f64"/>
<rect x="314" y="800" width="27" height="32" fill="#5f9f8f"/><rect x="317" y="803" width="20" height="26" fill="#ffffd0"/>
<rect x="320.500" y="808.500" width="14" height="15" fill="none" stroke="#000"/><path d="M327.500 810V819M327.500 821V823" stroke="#000" stroke-width="1.500"/>
<rect x="342" y="800" width="1" height="32" fill="#2f6f64"/><rect x="344" y="800" width="1" height="32" fill="#000"/>
<text class="l" x="348" y="820" style="font-size:11.700px">&lt;M1&gt; - Select first area corner</text>

<!-- units -->
<rect x="1355" y="800" width="2" height="32" fill="#000"/>
<rect x="1357" y="800" width="78" height="32" fill="#52c8aa"/>
<rect x="1363" y="804" width="69" height="24" fill="#52c8aa"/>
<path d="M1363 804H1432L1430 806H1365V826L1363 828z" fill="#b8f4e4"/><path d="M1432 804V828H1363L1365 826H1430V806z" fill="#2f7f6e"/>
<text class="l" x="1369" y="821" textLength="19" lengthAdjust="spacingAndGlyphs" style="font-size:14px">MM</text>
<rect x="1413" y="813" width="11" height="6" fill="#9cdcdc" stroke="#2f7f6e"/>
<rect x="1355" y="832" width="81" height="2" fill="#000"/>

<!-- status -->
<rect x="0" y="834" width="1440" height="3" fill="#52a898"/>
<rect x="0" y="836" width="1434" height="26" fill="#000"/>
<rect x="0" y="837" width="1433" height="24" fill="#fff"/>
<rect x="1" y="838" width="1430" height="20" fill="#b0ffff"/>
<rect x="1" y="858" width="1431" height="2" fill="#7f9f9f"/>
<rect x="1430" y="838" width="2" height="22" fill="#7f9f9f"/>
<text class="l" x="642" y="852" style="font-size:11.700px">DX=1,DY=1,D=1.4142125</text>
<rect x="0" y="862" width="1440" height="4" fill="#c8c8c0"/>
<rect x="0" y="866" width="1440" height="3" fill="#707070"/>
</svg>
</body></html>
